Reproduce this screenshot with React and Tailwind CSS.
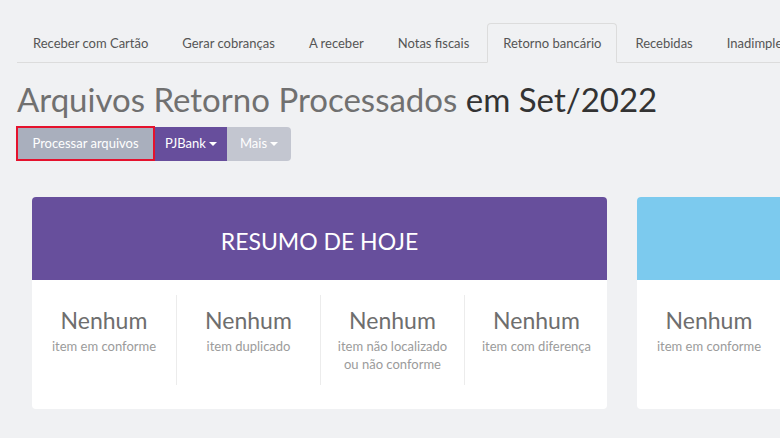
import React from "react";

const tabs = [
  "Receber com Cartão",
  "Gerar cobranças",
  "A receber",
  "Notas fiscais",
  "Retorno bancário",
  "Recebidas",
  "Inadimplentes",
];

function Caret() {
  return (
    <span className="inline-block ml-[3px] w-0 h-0 border-l-[4px] border-r-[4px] border-t-[4px] border-l-transparent border-r-transparent border-t-white align-middle" />
  );
}

function Stat({ sub, first }) {
  return (
    <div
      className={
        "w-[144px] shrink-0 h-[90px] flex flex-col items-center pt-[10px] " +
        (first ? "" : "border-l border-[#ececec]")
      }
    >
      <div className="text-[23px] leading-[30px] text-[#6e6e6e]">Nenhum</div>
      <div className="mt-[2px] text-[13px] leading-[18px] text-[#9b9b9b] text-center">
        {sub.map((s, i) => (
          <div key={i}>{s}</div>
        ))}
      </div>
    </div>
  );
}

function Card({ color, title, stats }) {
  return (
    <div className="w-[575px] shrink-0 bg-white rounded-[4px] overflow-hidden">
      <div
        className={
          "h-[83px] flex items-center justify-center pt-[6px] text-white text-[23px] " + color
        }
      >
        {title}
      </div>
      <div className="flex pt-[15px] pb-[24px]">
        {stats.map((s, i) => (
          <Stat key={i} sub={s} first={i === 0} />
        ))}
      </div>
    </div>
  );
}

export default function App() {
  const stats = [
    ["item em conforme"],
    ["item duplicado"],
    ["item não localizado", "ou não conforme"],
    ["item com diferença"],
  ];
  return (
    <div
      className="w-[780px] h-[438px] overflow-hidden bg-[#f0f1f3]"
      style={{ fontFamily: "Lato, 'Open Sans', sans-serif" }}
    >
      <div className="pl-[17px] pt-[23px]">
        <ul className="flex border-b border-[#dcdcdc] whitespace-nowrap">
          {tabs.map((t) => {
            const active = t === "Retorno bancário";
            return (
              <li key={t} className="mr-[2px] -mb-px shrink-0">
                <div
                  className={
                    "px-[15px] py-[9px] leading-5 text-[13px] text-[#555] border rounded-t-[4px] " +
                    (active
                      ? "border-[#dcdcdc] border-b-[#f0f1f3] bg-[#f0f1f3]"
                      : "border-transparent")
                  }
                >
                  {t}
                </div>
              </li>
            );
          })}
        </ul>
        <h1 className="mt-[16px] text-[33px] leading-[40px] text-[#707070] whitespace-nowrap">
          Arquivos Retorno Processados <span className="text-[#333]">em Set/2022</span>
        </h1>
        <div className="flex items-start mt-[7px] -ml-px text-[13px] text-white">
          <button className="h-[35px] w-[139px] border-2 border-[#e5122d] bg-[#a9afbd] flex items-center justify-center">
            Processar arquivos
          </button>
          <button className="mt-px h-[34px] w-[72px] bg-[#674e9c] flex items-center justify-center">
            PJBank
            <Caret />
          </button>
          <button className="mt-px h-[34px] w-[64px] bg-[#c3c6d0] rounded-r-[4px] flex items-center justify-center">
            Mais
            <Caret />
          </button>
        </div>
      </div>
      <div className="flex gap-[30px] pl-[32px] mt-[36px]">
        <Card color="bg-[#674f9c]" title="RESUMO DE HOJE" stats={stats} />
        <Card color="bg-[#7ccaee]" title="" stats={stats} />
      </div>
    </div>
  );
}
